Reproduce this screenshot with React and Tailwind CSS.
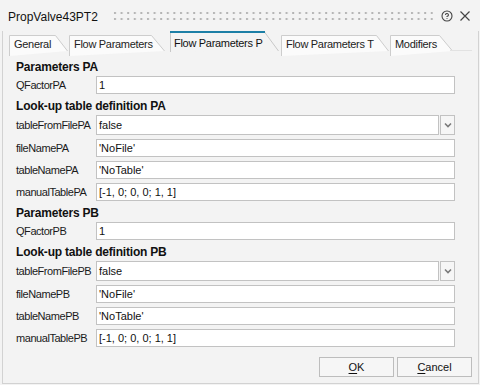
import React from 'react'

const tabs = [
  { label: 'General', cls: 'ml-[6px] w-[59px]', path: 'M0.5,21 V0.5 H46.5 L58.5,16', text: 'pl-[5px]' },
  { label: 'Flow Parameters', cls: 'ml-[1px] w-[96px]', path: 'M0.5,21 V0.5 H82.5 L95.5,16', text: 'pl-[5px]' },
  { label: 'Flow Parameters P', cls: 'ml-[5px] w-[109px]', active: true, text: 'pl-[4px]' },
  { label: 'Flow Parameters T', cls: 'ml-[2px] w-[108px]', path: 'M0.5,21 V0.5 H95.5 L107.5,16', text: 'pl-[5px]' },
  { label: 'Modifiers', cls: 'ml-[1px] w-[63px]', path: 'M0.5,21 V0.5 H49.5 L62.5,16', text: 'pl-[5px]' },
]

const rows = [
  { type: 'head', text: 'Parameters PA' },
  { label: 'QFactorPA', value: '1' },
  { type: 'head', text: 'Look-up table definition PA' },
  { label: 'tableFromFilePA', value: 'false', combo: true },
  { label: 'fileNamePA', value: "'NoFile'" },
  { label: 'tableNamePA', value: "'NoTable'" },
  { label: 'manualTablePA', value: '[-1, 0; 0, 0; 1, 1]' },
  { type: 'head', text: 'Parameters PB' },
  { label: 'QFactorPB', value: '1' },
  { type: 'head', text: 'Look-up table definition PB' },
  { label: 'tableFromFilePB', value: 'false', combo: true },
  { label: 'fileNamePB', value: "'NoFile'" },
  { label: 'tableNamePB', value: "'NoTable'" },
  { label: 'manualTablePB', value: '[-1, 0; 0, 0; 1, 1]' },
]

function Tab({ tab }) {
  if (tab.active) {
    return (
      <div className={`relative h-[21px] ${tab.cls}`}>
        <svg className="absolute left-0 top-0" width="109" height="21" viewBox="0 0 109 21">
          <path d="M0.5,21 V1 H94.5 L108.5,20" fill="#f3f3f3" stroke="#c8c8c8" />
          <path d="M0,1 H95" stroke="#1c7fa6" strokeWidth="2" />
        </svg>
        <span className={`relative block pt-[4px] ${tab.text} text-[11px] tracking-[-0.3px] text-[#111]`}>{tab.label}</span>
      </div>
    )
  }
  return (
    <div className={`relative h-[17px] mt-[4px] ${tab.cls}`}>
      <svg className="absolute left-0 top-0" width="120" height="21" viewBox="0 0 120 21">
        <path d={tab.path} fill="#fbfbfb" stroke="#cdcdcd" />
      </svg>
      <span className={`relative block pt-[1px] ${tab.text} text-[11px] tracking-[-0.3px] text-[#222]`}>{tab.label}</span>
    </div>
  )
}

function Row({ row }) {
  if (row.type === 'head') {
    return (
      <div className="h-[13px] flex items-end">
        <span className="text-[12px] leading-[13px] font-bold tracking-[-0.2px] text-[#111] translate-y-[2px]">{row.text}</span>
      </div>
    )
  }
  return (
    <div className={`flex items-center ${row.combo ? 'h-[20px]' : 'h-[18px]'}`}>
      <span className="w-[80px] text-[11px] tracking-[-0.45px] text-[#1a1a1a]">{row.label}</span>
      <div className="flex-1 flex h-full">
        <div className="flex-1 flex items-center bg-white border border-[#c2c2c2] pl-[2px] text-[11px] text-[#111]">
          {row.value}
        </div>
        {row.combo && (
          <div className="w-[15px] ml-[1px] flex items-center justify-center bg-[#f6f6f6] border border-[#c2c2c2]">
            <svg width="8" height="6" viewBox="0 0 8 6">
              <path d="M1,1.5 L4,4.5 L7,1.5" fill="none" stroke="#7a7a7a" strokeWidth="1.6" />
            </svg>
          </div>
        )}
      </div>
    </div>
  )
}

export default function App() {
  return (
    <div className="w-[480px] h-[385px] bg-[#f3f3f3] overflow-hidden" style={{ fontFamily: '"Liberation Sans", Arial, sans-serif' }}>
      {/* title bar */}
      <div className="h-[31px] flex items-center pl-[8px] pr-[10px]">
        <span className="text-[12px] text-[#111] w-[105px] translate-y-[1px]">PropValve43PT2</span>
        <svg width="320" height="10" viewBox="0 0 320 10">
          <defs>
            <pattern id="grip" width="6.6" height="6" patternUnits="userSpaceOnUse">
              <rect x="1" y="1" width="2" height="2" fill="#b4b4b4" />
            </pattern>
          </defs>
          <rect x="0" y="0" width="320" height="10" fill="url(#grip)" />
        </svg>
        <div className="flex-1" />
        <svg width="12" height="12" viewBox="0 0 24 24" fill="none" stroke="#444" strokeWidth="2.2" strokeLinecap="round" className="mr-[7px]">
          <circle cx="12" cy="12" r="10" />
          <path d="M9.09 9a3 3 0 0 1 5.83 1c0 2-3 3-3 3" />
          <path d="M12 17h.01" />
        </svg>
        <svg width="10" height="10" viewBox="0 0 10 10" stroke="#444" strokeWidth="1.2">
          <path d="M0.5,0.5 L9.5,9.5 M9.5,0.5 L0.5,9.5" />
        </svg>
      </div>

      {/* body frame */}
      <div className="ml-[2px] w-[477px] h-[353px] border-l border-r border-b border-[#d2d2d2] flex flex-col">
        <div className="relative h-[21px] flex items-start">
          {tabs.map((t) => (
            <Tab key={t.label} tab={t} />
          ))}
          <div className="absolute left-[447px] right-[6px] top-[19px] h-px bg-[#e2e2e2]" />
        </div>

        <div className="flex flex-col gap-[4px] pt-[7px] pl-[13px] pr-[23px]">
          {rows.map((r, i) => (
            <Row key={i} row={r} />
          ))}
        </div>

        <div className="flex justify-end gap-[3px] mt-[10px] pr-[6px]">
          <button className="w-[75px] h-[20px] bg-[#f6f6f6] border border-[#bdbdbd] text-[11px] text-[#111]">
            <span className="underline underline-offset-[2px] decoration-1">O</span>K
          </button>
          <button className="w-[75px] h-[20px] bg-[#f6f6f6] border border-[#bdbdbd] text-[11px] text-[#111]">
            <span className="underline underline-offset-[2px] decoration-1">C</span>ancel
          </button>
        </div>
      </div>
    </div>
  )
}
